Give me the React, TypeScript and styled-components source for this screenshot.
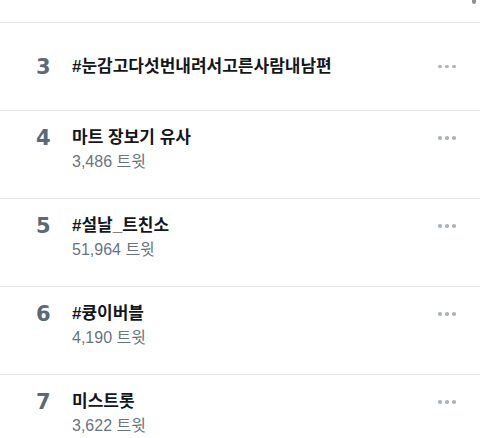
import React from "react";
import styled, { createGlobalStyle } from "styled-components";

const Global = createGlobalStyle`
  html, body { margin: 0; padding: 0; background: #ffffff; }
  body { font-family: "Liberation Sans", "Noto Sans CJK KR", sans-serif; }
`;

const Page = styled.div`
  position: relative;
  width: 480px;
  height: 438px;
  overflow: hidden;
  background: #ffffff;
`;

const TopSpace = styled.div`
  height: 22px;
`;

const ScrollIndicator = styled.div`
  position: absolute;
  top: 0;
  right: 4px;
  width: 4px;
  height: 4px;
  border-radius: 0 0 2px 2px;
  background: #8d8f92;
`;

const List = styled.ul`
  list-style: none;
  margin: 0;
  padding: 0;
`;

const Row = styled.li<{ $centered?: boolean }>`
  display: grid;
  grid-template-columns: 72px 1fr 48px;
  align-items: ${(p) => (p.$centered ? "center" : "start")};
  height: 88px;
  box-sizing: border-box;
  border-top: 1px solid #e2e5e8;
  padding-top: ${(p) => (p.$centered ? "0" : "16px")};
`;

const Rank = styled.div`
  padding-left: 36px;
  font: 700 21px/22px "DejaVu Sans", "Liberation Sans", sans-serif;
  color: #5b6877;
`;

const Body = styled.div`
  display: flex;
  flex-direction: column;
  gap: 2px;
`;

const Title = styled.div`
  font: 700 17px/22px "Liberation Sans", "Noto Sans CJK KR", sans-serif;
  color: #14171a;
  white-space: nowrap;
`;

const Sub = styled.div`
  font: 400 16px/22px "Liberation Sans", "Noto Sans CJK KR", sans-serif;
  color: #67757f;
`;

const More = styled.div`
  display: flex;
  align-items: center;
  gap: 3.5px;
  height: 22px;
  padding-left: 6px;
`;

const Dot = styled.span`
  width: 3.5px;
  height: 3.5px;
  border-radius: 50%;
  background: #acb4bc;
`;

const items = [
  { rank: 3, title: "#눈감고다섯번내려서고른사람내남편" },
  { rank: 4, title: "마트 장보기 유사", count: "3,486" },
  { rank: 5, title: "#설날_트친소", count: "51,964" },
  { rank: 6, title: "#큥이버블", count: "4,190" },
  { rank: 7, title: "미스트롯", count: "3,622" },
];

export default function App() {
  return (
    <Page>
      <Global />
      <ScrollIndicator />
      <TopSpace />
      <List>
        {items.map((it) => (
          <Row key={it.rank} $centered={!it.count}>
            <Rank>{it.rank}</Rank>
            <Body>
              <Title>{it.title}</Title>
              {it.count && <Sub>{it.count} 트윗</Sub>}
            </Body>
            <More>
              <Dot />
              <Dot />
              <Dot />
            </More>
          </Row>
        ))}
      </List>
    </Page>
  );
}
